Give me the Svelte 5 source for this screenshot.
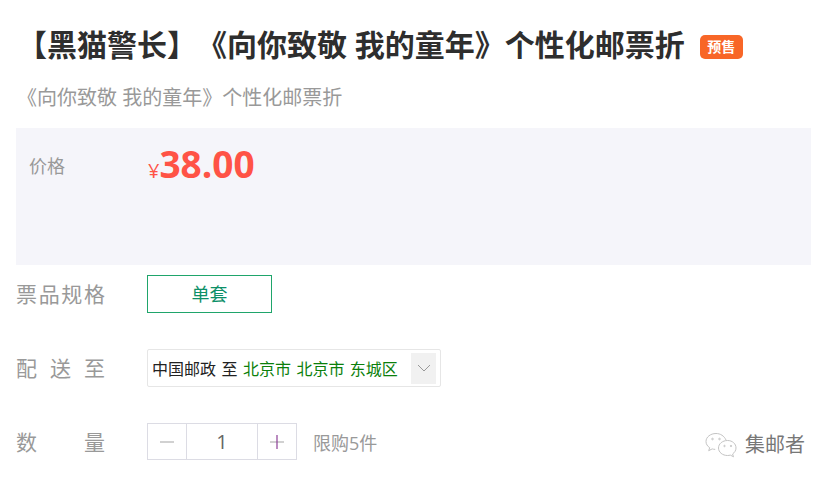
<script>
    const spec = '单套'
    const limit = 5
    let qty = 1
</script>

<div class="goods">
    <h1 class="title">【黑猫警长】《向你致敬 我的童年》个性化邮票折<span class="tag">预售</span></h1>
    <p class="sub">《向你致敬 我的童年》个性化邮票折</p>

    <section class="price_box">
        <span class="price_label">价格</span>
        <span class="price"><small>¥</small>38.00</span>
    </section>

    <div class="row row_spec">
        <span class="label"><i>票</i><i>品</i><i>规</i><i>格</i></span>
        <button class="spec">{spec}</button>
    </div>

    <div class="row row_ship">
        <span class="label"><i>配</i><i>送</i><i>至</i></span>
        <div class="ship">
            <span>中国邮政 至 <em>北京市 北京市 东城区</em></span>
            <span class="arrow">
                <svg width="14" height="8" viewBox="0 0 14 8"><path d="M1 1l6 6 6-6" fill="none" stroke="#999" stroke-width="1"/></svg>
            </span>
        </div>
    </div>

    <div class="row row_qty">
        <span class="label"><i>数</i><i>量</i></span>
        <div class="qty">
            <span class="step"><svg width="16" height="16" viewBox="0 0 16 16"><path d="M1 8h14" stroke="#bdbdbd" stroke-width="1.4"/></svg></span>
            <span class="num">{qty}</span>
            <span class="step"><svg width="16" height="16" viewBox="0 0 16 16"><path d="M1 8h14" stroke="#bdbdbd" stroke-width="1.4"/><path d="M8 1v14" stroke="#8d3f97" stroke-width="1.2"/></svg></span>
        </div>
        <span class="limit">限购{limit}件</span>
    </div>

    <div class="mark">
        <svg width="34" height="26" viewBox="0 0 34 26" fill="none" stroke="#c4c4c4" stroke-width="1">
            <path d="M11 1.500c-5.500 0-10 3.500-10 8 0 2.600 1.400 4.700 3.700 6.200l-1 3 3.500-1.800c1 .3 2 .5 3 .5"/>
            <path d="M21 8c-1.800-4-5.500-6.500-10-6.500"/>
            <path d="M22.500 8.500c-5 0-9 3.300-9 7.500s4 7.500 9 7.500c1 0 2-.2 2.800-.4l3.200 1.700-.9-2.800c1.900-1.400 3.400-3.500 3.400-6 0-4.200-3.500-7.500-8.500-7.500z"/>
            <circle cx="7.500" cy="7" r=".8"/><circle cx="14.500" cy="7" r=".8"/>
            <circle cx="19.500" cy="14" r=".7"/><circle cx="26" cy="14" r=".7"/>
        </svg>
        <span>集邮者</span>
    </div>
</div>

<style>
    :global(body) {
        margin: 0;
        background: #fff;
    }

    * {
        font-family: "Open Sans", "Noto Sans CJK SC", sans-serif;
        text-spacing-trim: space-all;
    }

    .goods {
        position: relative;
        width: 831px;
        height: 481px;
        padding: 0 20px 0 16px;
        box-sizing: border-box;
        overflow: hidden;
    }

    .title {
        margin: 0;
        padding: 23px 0 0 1px;
        font-size: 30px;
        line-height: 44px;
        font-weight: 700;
        color: #2e2e2e;
        white-space: nowrap;
    }

    .tag {
        display: inline-block;
        vertical-align: 4px;
        width: 43px;
        height: 24px;
        margin-left: 15px;
        border-radius: 5px;
        background: #f86627;
        color: #fff;
        font-size: 14px;
        line-height: 24px;
        font-weight: 700;
        text-align: center;
    }

    .sub {
        margin: 0;
        padding: 16px 0 0 1px;
        font-size: 20px;
        line-height: 30px;
        color: #999;
    }

    .price_box {
        display: flex;
        align-items: flex-start;
        height: 137px;
        margin-top: 15px;
        background: #f5f5fa;
    }

    .price_label {
        width: 119px;
        padding: 25px 0 0 13px;
        font-size: 18px;
        line-height: 26px;
        color: #999;
    }

    .price {
        padding-top: 11px;
        font-size: 37px;
        line-height: 50px;
        font-weight: 700;
        color: #ff5346;
    }

    .price small {
        font-size: 20px;
        font-weight: 400;
    }

    .row {
        display: flex;
        align-items: center;
    }

    .row_spec {
        margin-top: 10px;
    }

    .row_ship {
        margin-top: 36px;
    }

    .row_qty {
        margin-top: 36px;
    }

    .label {
        display: flex;
        justify-content: space-between;
        width: 89px;
        margin-right: 42px;
        padding-bottom: 2px;
        font-size: 21px;
        color: #999;
    }

    .label i {
        font-style: normal;
    }

    .spec {
        width: 125px;
        height: 38px;
        padding: 0 0 2px;
        border: 1px solid #1fa56b;
        background: #fff;
        color: #0d9068;
        font-size: 18px;
    }

    .ship {
        display: flex;
        align-items: center;
        justify-content: space-between;
        width: 294px;
        height: 38px;
        padding: 0 4px 0 4px;
        box-sizing: border-box;
        border: 1px solid #e6e6e6;
        border-radius: 2px;
        font-size: 16px;
        word-spacing: 1.3px;
        color: #222;
    }

    .ship em {
        font-style: normal;
        color: #0b7f0b;
    }

    .arrow {
        display: flex;
        align-items: center;
        justify-content: center;
        width: 25px;
        height: 31px;
        background: #f1f1f1;
    }

    .qty {
        display: flex;
        width: 150px;
        height: 37px;
        box-sizing: border-box;
        border: 1px solid #dcdce4;
    }

    .step {
        display: flex;
        align-items: center;
        justify-content: center;
        width: 38px;
    }

    .num {
        flex: 1;
        border-left: 1px solid #dcdce4;
        border-right: 1px solid #dcdce4;
        text-align: center;
        font-size: 20px;
        line-height: 35px;
        color: #666;
    }

    .limit {
        margin-left: 16px;
        font-size: 18px;
        color: #999;
    }

    .mark {
        position: absolute;
        left: 705px;
        top: 432px;
        display: flex;
        align-items: center;
        gap: 6px;
        font-size: 20px;
        line-height: 26px;
        color: #777;
    }
</style>
